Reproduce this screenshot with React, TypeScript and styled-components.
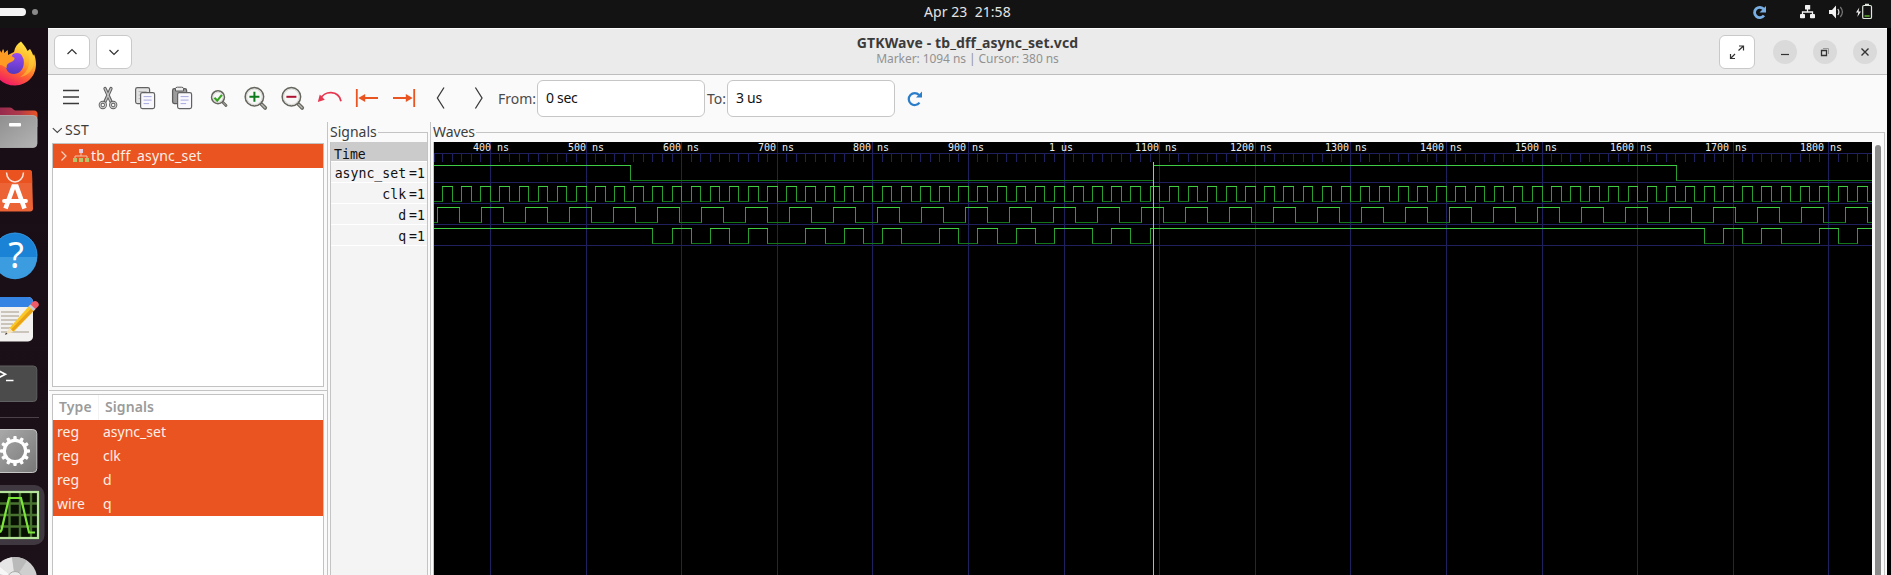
import React from "react";
import styled, { createGlobalStyle } from "styled-components";

const Global = createGlobalStyle`
  * { box-sizing: border-box; }
  html, body, #root { height: 100%; }
  body {
    margin: 0;
    overflow: hidden;
    background: #000;
    font-family: "Noto Sans", "Open Sans", sans-serif;
    font-size: 14px;
    color: #3d3d3d;
  }
  svg { display: block; flex: none; }
`;

const Desktop = styled.div`
  display: flex;
  flex-direction: column;
  width: 1891px;
  height: 575px;
  overflow: hidden;
`;

const TopBar = styled.header`
  display: flex;
  align-items: center;
  height: 28px;
  flex: none;
  background: #131313;
`;

const Clock = styled.div`
  flex: none;
  width: 88px;
  margin: -6px 0 0 924px;
  color: #e4e4e4;
  font-size: 14px;
  letter-spacing: 0.05px;
  white-space: pre;
`;

const Tray = styled.div`
  margin-left: 738px;
`;

const Body = styled.div`
  display: flex;
  flex: 1;
  min-height: 0;
`;

const DockColumn = styled.nav`
  display: flex;
  flex-direction: column;
  width: 48px;
  flex: none;
  padding-top: 3px;
  overflow: hidden;
  background: linear-gradient(#190d15, #1d1119);
`;

const DockRule = styled.div`
  width: 39px;
  height: 1px;
  flex: none;
  margin: 2px 0 1px;
  background: #4b4248;
`;

const Window = styled.main`
  display: flex;
  flex-direction: column;
  width: 1839px;
  flex: none;
  background: #fafafa;
`;

const HeaderBar = styled.div`
  display: flex;
  align-items: center;
  height: 47px;
  flex: none;
  padding: 0 10px 0 6px;
  background: #ebebeb;
  border-top: 1px solid #fdfdfd;
  border-bottom: 1px solid #bdbdbd;
`;

const HeaderButton = styled.button<{ $gap?: number }>`
  display: flex;
  width: 36px;
  height: 34px;
  flex: none;
  padding: 0;
  margin: 0 ${(p) => p.$gap ?? 6}px 0 0;
  border: 1px solid #c9c9c9;
  border-radius: 6px;
  background: #fff;
`;

const Titles = styled.div`
  flex: 1;
  padding: 0 0 2px 78px;
  text-align: center;
`;

const Title = styled.div`
  font-size: 14px;
  line-height: 17px;
  font-weight: 700;
  letter-spacing: 0.1px;
  color: #3b3b3b;
`;

const Subtitle = styled.div`
  font-size: 12px;
  line-height: 16px;
  letter-spacing: -0.07px;
  color: #929292;
`;

const WindowControl = styled.button`
  display: flex;
  width: 24px;
  height: 24px;
  flex: none;
  margin: 0 0 0 16px;
  padding: 0;
  border: 0;
  border-radius: 50%;
  background: #dadada;
`;

const ToolBar = styled.div`
  display: flex;
  height: 47px;
  flex: none;
  align-items: center;
  padding-left: 4px;
`;

const FieldLabel = styled.label<{ $width: number; $gap: number }>`
  width: ${(p) => p.$width}px;
  flex: none;
  margin: -1px 0 0 ${(p) => p.$gap}px;
  white-space: nowrap;
  font-size: 14px;
  color: #4b4b4b;
`;

const Field = styled.div`
  width: 168px;
  height: 37px;
  flex: none;
  padding-left: 8px;
  border: 1px solid #c6c6c6;
  border-radius: 6px;
  background: #fff;
  color: #111;
  font-size: 14px;
  line-height: 34px;
  letter-spacing: -0.3px;
`;

const Panes = styled.div`
  display: flex;
  flex: 1;
  min-height: 0;
`;

const SidePane = styled.aside`
  display: flex;
  flex-direction: column;
  width: 280px;
  flex: none;
  border-right: 1px solid #c4c4c4;
`;

const Expander = styled.div`
  display: flex;
  height: 21px;
  flex: none;
  padding-left: 4px;
  font-size: 14px;
  line-height: 16px;
  letter-spacing: 0.3px;
`;

const TreeBox = styled.div<{ $height?: number }>`
  width: 272px;
  flex: ${(p) => (p.$height ? "none" : "1")};
  height: ${(p) => (p.$height ? `${p.$height}px` : "auto")};
  margin-left: 4px;
  border: 1px solid #c2c2c2;
  border-bottom-width: ${(p) => (p.$height ? 1 : 0)}px;
  background: #fff;
`;

const TreeRow = styled.div<{ $spacing?: number }>`
  display: flex;
  height: 24px;
  background: #e95420;
  color: #fdeee7;
  font-size: 14px;
  line-height: 23px;
  letter-spacing: ${(p) => p.$spacing ?? 0}px;
`;

const PaneRule = styled.div`
  height: 1px;
  flex: none;
  margin: 3px 0 3px 1px;
  background: #c4c4c4;
`;

const ListHead = styled.div`
  display: flex;
  height: 25px;
  color: #9b9b9b;
  font-size: 14px;
  line-height: 24px;
  font-weight: 600;
  letter-spacing: 0.1px;
`;

const HeadCell = styled.div<{ $width?: number }>`
  width: ${(p) => (p.$width ? `${p.$width}px` : "auto")};
  padding-left: 6px;
  border-right: ${(p) => (p.$width ? "1px solid #f3f3f3" : "0")};
`;

const TypeCell = styled.div`
  width: 50px;
  padding-left: 4px;
`;

const Frame = styled.section<{ $width: number; $ruled?: boolean }>`
  display: flex;
  flex-direction: column;
  width: ${(p) => p.$width}px;
  flex: none;
  padding: 0 ${(p) => (p.$ruled ? 2 : 0)}px 0 2px;
  border-right: ${(p) => (p.$ruled ? "1px solid #c4c4c4" : "0")};
`;

const FrameCaption = styled.div<{ $spacing: number }>`
  display: flex;
  height: 20px;
  flex: none;
  font-size: 14px;
  line-height: 20px;
  letter-spacing: ${(p) => p.$spacing}px;
  &::after {
    content: "";
    flex: 1;
    height: 10px;
    margin: 10px 0 0 1px;
    border-top: 1px solid #c4c4c4;
    border-right: 1px solid #c4c4c4;
  }
`;

const FrameBody = styled.div`
  display: flex;
  flex: 1;
  border: solid #c4c4c4;
  border-width: 0 1px;
`;

const SignalList = styled.div`
  flex: 1;
  background: #f4f4f4;
  color: #111;
  font-family: "DejaVu Sans Mono", monospace;
  font-size: 13.2px;
`;

const TimeRow = styled.div`
  height: 20px;
  padding-left: 3px;
  background: #cbcbcb;
  border-bottom: 1px solid #fff;
  line-height: 25px;
`;

const SignalRow = styled.div`
  display: flex;
  justify-content: flex-end;
  gap: 3px;
  height: 21px;
  padding-right: 2px;
  border-bottom: 1px solid #fff;
  line-height: 23px;
`;

const WaveArea = styled.div`
  display: flex;
  flex: 1;
`;

const ScrollThumb = styled.div`
  width: 6px;
  height: 440px;
  flex: none;
  margin: 3px 0 0 3px;
  border-radius: 3px 3px 0 0;
  background: #8b8b8b;
`;

/* ---------- waveforms ---------- */

const LEFT = 434;
const TOP = 142;
const START = 341;
const xAt = (ns: number) => Math.floor(490.4 + 0.956 * (ns - 400)) + 0.5;

const every = (first: number, step: number) => {
  const out: number[] = [];
  for (let t = first; t < 1846; t += step) out.push(t);
  return out;
};

interface Trace {
  name: string;
  high: number;
  initial: 0 | 1;
  edges: number[];
}

const traces: Trace[] = [
  { name: "async_set", high: 165, initial: 1, edges: [547, 1094, 1641] },
  { name: "clk", high: 186, initial: 0, edges: every(350, 10) },
  { name: "d", high: 207, initial: 0, edges: every(345, 23) },
  {
    name: "q",
    high: 228,
    initial: 1,
    edges: [
      570, 590, 610, 630, 650, 670, 690, 730, 750, 770, 790, 810, 830, 870, 890,
      910, 930, 950, 970, 990, 1030, 1050, 1070, 1090, 1670, 1690, 1710, 1730,
      1750, 1790, 1810, 1830,
    ],
  },
];

const tracePaths = ({ high, initial, edges }: Trace) => {
  const hi = high + 0.5;
  const lo = high + 15.5;
  let top = "";
  let low = "";
  let sides = "";
  let level: number = initial;
  let from = LEFT;
  [...edges, Infinity].forEach((t) => {
    const x = t === Infinity ? 1872 : xAt(t);
    const seg = `M${from - 0.5} ${level ? hi : lo}H${x + 0.5}`;
    if (level) top += seg;
    else low += seg;
    if (t !== Infinity) sides += `M${x} ${hi}V${lo}`;
    level = 1 - level;
    from = x;
  });
  return { top, low, sides };
};

const labels = [
  ...[400, 500, 600, 700, 800, 900].map((n, i) => ({ text: `${n} ns`, x: 473 + 95 * i })),
  { text: "1 us", x: 1049 },
  ...[1100, 1200, 1300, 1400, 1500, 1600, 1700, 1800].map((n, i) => ({
    text: `${n} ns`,
    x: 1135 + 95 * i,
  })),
];

const Waves = () => {
  const majors = every(400, 100).map(xAt);
  const minors = every(START + 1, 1).filter((t) => t % 10 === 0 && t % 100 !== 0).map(xAt);
  return (
    <svg width="1438" height="433" viewBox={`${LEFT} ${TOP} 1438 433`}>
      <rect x={LEFT} y={TOP} width="1438" height="433" fill="#000" />
      <g stroke="#20205f" fill="none">
        <path d={[153, 182, 203, 224, 245].map((y) => `M434 ${y + 0.5}H1872`).join("")} />
        <path d={[434.5, ...minors].map((x) => `M${x} 153V162`).join("")} />
        <path d={majors.map((x) => `M${x} 142V575`).join("")} />
      </g>
      {traces.map((t) => {
        const p = tracePaths(t);
        return (
          <g key={t.name} fill="none">
            <path d={p.low} stroke="#14741a" />
            <path d={p.sides} stroke="#2a9f30" />
            <path d={p.top} stroke="#3fcb44" />
          </g>
        );
      })}
      <path d="M1153.5 162V575" stroke="#f09c98" />
      <g fill="#eee" fontFamily='"DejaVu Sans Mono", monospace' fontSize="10">
        {labels.map((l) => (
          <text key={l.text} x={l.x} y="151">{l.text}</text>
        ))}
      </g>
    </svg>
  );
};

/* ---------- toolbar icons, drawn around (0,0) ---------- */

const Tool = ({ children, w = 37 }: { children: React.ReactNode; w?: number }) => (
  <svg width={w} height="47" viewBox={`-19 -23 ${w} 47`} fill="none">
    {children}
  </svg>
);

const Sheet = ({ x, y, front }: { x: number; y: number; front?: boolean }) => (
  <g>
    <rect x={x} y={y} width="14" height="16" rx="1.8" fill={front ? "#f8f8fc" : "#e2e2e2"} stroke="#626262" strokeWidth="1.2" />
    <path d={`M${x + 3} ${y + 4}h8M${x + 3} ${y + 7.5}h8M${x + 3} ${y + 11}h5.5`} stroke={front ? "#a6a8df" : "#b3b3b3"} />
  </g>
);

const Lens = ({ r, children }: { r: number; children?: React.ReactNode }) => (
  <g>
    <path d={`M${r * 0.62} ${r * 0.65}L${r + 1.6} ${r + 1.9}`} stroke="#66665f" strokeWidth={r > 8 ? 3.8 : 2.8} strokeLinecap="round" />
    <path d={`M${r * 0.8} ${r * 0.83}L${r + 1.4} ${r + 1.7}`} stroke="#b5b5ae" strokeWidth={r > 8 ? 1.5 : 1} strokeLinecap="round" />
    <circle r={r} fill="#f7f7f7" stroke="#66665f" strokeWidth="1.6" />
    <circle r={r - 1.4} stroke="#d6d6d2" />
    {children}
  </g>
);

const tools: React.ReactNode[] = [
  <path d="M-8 -7.5H8M-8 -1H8M-8 5.5H8" stroke="#3a3a3a" strokeWidth="1.4" />,
  <g>
    <path d="M-3 -9.5L3.2 4M3 -9.5L-3.2 4" stroke="#606060" strokeWidth="3.3" strokeLinecap="round" />
    <path d="M-3 -9.5L2.6 3M3 -9.500L-2.6 3" stroke="#c4c4c4" strokeWidth="1.3" strokeLinecap="round" />
    <circle cx="-5.2" cy="7" r="2.7" stroke="#606060" strokeWidth="2.9" />
    <circle cx="5.2" cy="7" r="2.7" stroke="#606060" strokeWidth="2.9" />
    <circle cx="-5.2" cy="7" r="2.7" stroke="#c9c9c9" strokeWidth="1.1" />
    <circle cx="5.2" cy="7" r="2.7" stroke="#c9c9c9" strokeWidth="1.1" />
  </g>,
  <g>
    <Sheet x={-9.4} y={-10.4} />
    <Sheet x={-4.4} y={-5.4} front />
  </g>,
  <g>
    <rect x="-9.4" y="-9.4" width="14" height="15" rx="1.8" fill="#9c9c9c" stroke="#5c5c5c" strokeWidth="1.3" />
    <path d="M-6.5 -7v-2.5q0-1.3 2-1.3h4q2 0 2 1.3V-7z" fill="#eee" stroke="#5c5c5c" />
    <Sheet x={-4.4} y={-5.4} front />
  </g>,
  <g transform="translate(-1 -.8)">
    <Lens r={6.4}>
      <path d="M-3.600 .6l2.800 2.800L3.900 -2.4" stroke="#38a521" strokeWidth="2.1" />
    </Lens>
  </g>,
  <g transform="translate(-1.6 -1.2)">
    <Lens r={9.2}>
      <path d="M-5 0H5M0 -5V5" stroke="#0d7a1e" strokeWidth="2" />
    </Lens>
  </g>,
  <g transform="translate(-1.6 -1.2)">
    <Lens r={9.2}>
      <path d="M-5 0H5" stroke="#ad1230" strokeWidth="2" />
    </Lens>
  </g>,
  <g>
    <path d="M-9.5 1C-6 -7.5 8.5 -8 11 3.2" stroke="#e73650" strokeWidth="1.8" />
    <path d="M-12.2 4L-10.2 -3.4L-5.2 1.8z" fill="#e73650" />
  </g>,
  <g>
    <path d="M-10.2 -9V9M-4 0H11" stroke="#e95420" strokeWidth="1.8" />
    <path d="M-8.7 0L-1.8 -4v8z" fill="#e95420" />
  </g>,
  <g>
    <path d="M10.2 -9V9M4 0H-11" stroke="#e95420" strokeWidth="1.8" />
    <path d="M8.7 0L1.8 -4v8z" fill="#e95420" />
  </g>,
  <path d="M3 -10.5L-3.6 0L3 10.5" stroke="#3a3a3a" strokeWidth="1.3" />,
  <path d="M-2.6 -10.5L4 0L-2.6 10.5" stroke="#3a3a3a" strokeWidth="1.3" />,
];

/* ---------- dock icons, drawn around (0,0) ---------- */

const gear = Array.from({ length: 12 }, (_, i) => (
  <rect key={i} x="-1.7" y="-15" width="3.4" height="5" rx="1" transform={`rotate(${i * 30})`} fill="#fff" />
));

const Dock = ({ children }: { children: React.ReactNode }) => (
  <svg width="48" height="64" viewBox="-15 -32 48 64" fill="none">
    {children}
  </svg>
);

const FirefoxIcon = () => (
  <Dock>
    <defs>
      <linearGradient id="ff" x1=".8" y1="0" x2=".35" y2="1">
        <stop offset="0" stopColor="#fff04a" />
        <stop offset=".4" stopColor="#ffb02a" />
        <stop offset=".68" stopColor="#ff6230" />
        <stop offset="1" stopColor="#f01a68" />
      </linearGradient>
      <linearGradient id="ffg" x1=".5" y1="0" x2=".4" y2="1">
        <stop offset="0" stopColor="#9a4cf0" />
        <stop offset="1" stopColor="#5338c0" />
      </linearGradient>
    </defs>
    <path d="M6 -21.500C8 -19 11 -16 12.500 -12L15 -14C18 -10 17.500 -8 18.500 -7.500L19 -9C25 6 17 22 0 22.500C-14 22.500 -22 12 -21 0C-20 -7 -17 -10 -15 -13L-14 -9L-12 -14L-11 -9.500L-7.500 -13L-7 -8L-1 -11C0 -16 2 -19 6 -21.500z" fill="url(#ff)" />
    <path d="M-2 -9C2 -11 5 -10 6.500 -8L8.500 -4C10 2 7 11 -1 11C-7 11 -10 6 -9 1z" fill="url(#ffg)" />
    <path d="M-15 -12L-13 -10L-11.500 -14L-10.500 -9.500L-7.500 -12.500L-7 -8C-4 -8 -2 -6 -.5 -5C0 -3 -3 -1 -6 0C-8 1 -9 3 -8 5C-11 4 -12 2 -15 2z" fill="#ff9a22" />
    <path d="M12.500 -12C16 -4 15 8 5 14C14 13 21 5 18.500 -7.500z" fill="#ffd23a" opacity=".5" />
  </Dock>
);

const FilesIcon = () => (
  <Dock>
    <defs>
      <linearGradient id="fold" x1="0" y1="0" x2="1" y2="1">
        <stop offset="0" stopColor="#8c8c8c" />
        <stop offset="1" stopColor="#b4b4b4" />
      </linearGradient>
      <linearGradient id="tab">
        <stop offset="0" stopColor="#8f2450" />
        <stop offset=".6" stopColor="#b03a4a" />
        <stop offset="1" stopColor="#ea5425" />
      </linearGradient>
    </defs>
    <path d="M-22 -19.500H-5Q-3 -19.500 -1.500 -17.500L0 -16.500H19Q22.500 -16.500 22.500 -13V0H-22z" fill="url(#tab)" />
    <rect x="-22" y="-11.500" width="44" height="32" rx="4" fill="url(#fold)" stroke="#b5b5b5" strokeWidth=".8" />
    <rect x="-6" y="-4" width="12" height="3.500" rx="1" fill="#fff" />
  </Dock>
);

const SoftwareIcon = () => (
  <Dock>
    <path d="M-18 -21H14Q17 -21 17 -18L18 17.500Q18 20.500 15 20.500H-18z" fill="#ec6335" />
    <path d="M-18 -21H14Q17 -21 17 -18L17.200 -8H-18z" fill="#ea5220" />
    <path d="M-8.500 -18.500C-8 -6 8 -6 8.500 -18.500" stroke="#fbe6dc" strokeWidth="1.500" />
    <path d="M-9.500 17.500L-1.500 -4.500H1.500L9.500 17.500" stroke="#fff" strokeWidth="4.600" />
    <path d="M-11 10H11" stroke="#fff" strokeWidth="3.800" strokeLinecap="round" />
  </Dock>
);

const HelpIcon = () => (
  <Dock>
    <circle r="22.200" fill="#1a83d6" />
    <path d="M-22.200 2H22.200A22.200 22.200 0 0 1 -22.200 2z" fill="#3b9ce0" />
    <circle r="22" stroke="#3a9bdf" strokeWidth=".8" />
    <text x="1" y="12.500" textAnchor="middle" fill="#fff" fontFamily="Noto Sans" fontSize="36">?</text>
  </Dock>
);

const EditorIcon = () => (
  <Dock>
    <rect x="-20" y="-22" width="38" height="44.500" rx="5" fill="#f3f1ef" />
    <path d="M-20 -12V-22H13Q18 -22 18 -17V-12z" fill="#3584e4" />
    <path d="M-14 -7H4M-14 -3H4M-14 1H2M-14 5H-2M-14 9H-4M-14 13H14" stroke="#bdb5aa" strokeWidth="1.500" />
    <path d="M-5.500 9L14.500 -13.500L19.500 -9L-1.500 13z" fill="#f9c727" />
    <path d="M-2 12.500L19.500 -9L17 -11.300L-4 10.500z" fill="#eaa317" />
    <path d="M-5.500 9L-10 15.500L-1.500 13z" fill="#f6e3b8" />
    <path d="M-8.800 13.500L-10.200 15.800L-7.500 14.900z" fill="#333" />
    <path d="M14.500 -13.500L17.500 -17Q20 -19 22.500 -17Q25 -14.500 23 -12.500L19.500 -9z" fill="#ee5a68" />
    <path d="M13.500 -12.500L15.500 -14.500L20.500 -10L18.500 -8z" fill="#c8ccd0" />
  </Dock>
);

const TerminalIcon = () => (
  <Dock>
    <rect x="-22" y="-17" width="43.800" height="35.500" rx="3.500" fill="#4b4b4b" stroke="#606060" />
    <path d="M-16 -12L-9.500 -8.800L-16 -5.500M-9 -2.500H-1.500" stroke="#fff" strokeWidth="1.600" />
  </Dock>
);

const SettingsIcon = () => (
  <Dock>
    <defs>
      <linearGradient id="set" x1="0" y1="0" x2="1" y2="1">
        <stop offset="0" stopColor="#adadad" />
        <stop offset="1" stopColor="#777" />
      </linearGradient>
    </defs>
    <rect x="-22" y="-21.500" width="43.800" height="43" rx="4" fill="url(#set)" stroke="#c4c4c4" />
    {gear}
    <circle r="10.700" stroke="#fff" strokeWidth="3.200" />
  </Dock>
);

const GtkWaveIcon = () => (
  <Dock>
    <rect x="-30" y="-30" width="59.500" height="60" rx="10" fill="#403840" />
    <rect x="-24" y="-23" width="47" height="46" fill="#071003" />
    <path d="M-5.500 -22V22M5 -22V22M16 -22V22M-15 -11.500H22M-15 0H22M-15 11.500H22" stroke="#48722f" strokeWidth="2.400" />
    <rect x="-24" y="-23" width="47" height="46" stroke="#b5e59a" strokeWidth="2.200" />
    <path d="M-15 17.500L-13.500 15L-6 -17H6L14 17.500H20" stroke="#7be53a" strokeWidth="2.200" />
  </Dock>
);

const DiscIcon = () => (
  <Dock>
    <circle r="22" fill="#cfcfcf" />
    <path d="M0 0L-17 -14A22 22 0 0 1 -3 -21.800z" fill="#e6e6e6" />
    <path d="M0 0L-3 -21.800A22 22 0 0 1 12 -18.500z" fill="#bababa" />
    <path d="M0 0L-21 -7L-17 -14z" fill="#f7f7f7" />
    <circle r="7.500" fill="#e8e8e8" stroke="#aaa" />
  </Dock>
);

/* ---------- page ---------- */

const selected = [
  ["reg", "async_set"],
  ["reg", "clk"],
  ["reg", "d"],
  ["wire", "q"],
];

const WorkspaceDots = () => (
  <svg width="48" height="28" viewBox="0 0 48 28">
    <rect x="-12" y="8" width="38" height="8" rx="4" fill="#f4f4f4" />
    <circle cx="35" cy="12" r="3" fill="#8a8a8a" />
  </svg>
);

const TrayIcons = () => (
  <svg width="124" height="28" viewBox="1750 0 124 28" fill="none">
    <path d="M1763.800 9.200A5.200 5.200 0 1 0 1764 15.500" stroke="#79aee2" strokeWidth="2.800" />
    <path d="M1766 6V12.500H1759.500z" fill="#79aee2" />
    <g fill="#f2f2f2">
      <rect x="1805" y="5" width="5.200" height="4.500" rx=".6" />
      <rect x="1800" y="14" width="5" height="4.200" rx=".8" />
      <rect x="1810" y="14" width="5" height="4.200" rx=".8" />
      <path d="M1829 10h3l4-4.500v13l-4-4.500h-3z" />
      <path d="M1859.300 7.500L1856 12.500H1858.300L1857.300 17L1861 11.500H1858.500z" />
    </g>
    <path d="M1807.500 9V12M1802.500 14V12H1812.500V14" stroke="#f2f2f2" strokeWidth="1.300" />
    <path d="M1837.800 9Q1840 12 1837.800 15" stroke="#ddd" strokeWidth="1.200" />
    <path d="M1840.300 7Q1844.500 12 1840.300 17" stroke="#777" strokeWidth="1.200" />
    <rect x="1862.700" y="5.500" width="8.800" height="13" rx="1.300" stroke="#dfe8dc" strokeWidth="1.200" />
    <path d="M1865 4.500h4" stroke="#dfe8dc" strokeWidth="1.500" />
    <path d="M1864.500 16h5.200" stroke="#4b8a25" strokeWidth="2" />
  </svg>
);

const Activities = styled.div`
  width: 48px;
  flex: none;
  margin-right: -48px;
`;

export default function App() {
  return (
    <Desktop>
      <Global />
      <TopBar>
        <Activities><WorkspaceDots /></Activities>
        <Clock>{"Apr 23  21:58"}</Clock>
        <Tray><TrayIcons /></Tray>
      </TopBar>
      <Body>
        <DockColumn>
          <FirefoxIcon />
          <FilesIcon />
          <SoftwareIcon />
          <HelpIcon />
          <EditorIcon />
          <TerminalIcon />
          <DockRule />
          <SettingsIcon />
          <GtkWaveIcon />
          <DiscIcon />
        </DockColumn>
        <Window>
          <HeaderBar>
            <HeaderButton>
              <svg width="34" height="32" fill="none"><path d="M12.500 18L17 13.500L21.500 18" stroke="#333" strokeWidth="1.200" /></svg>
            </HeaderButton>
            <HeaderButton>
              <svg width="34" height="32" fill="none"><path d="M12.500 14L17 18.500L21.500 14" stroke="#333" strokeWidth="1.200" /></svg>
            </HeaderButton>
            <Titles>
              <Title>GTKWave - tb_dff_async_set.vcd</Title>
              <Subtitle>Marker: 1094 ns | Cursor: 380 ns</Subtitle>
            </Titles>
            <HeaderButton $gap={2}>
              <svg width="34" height="32" fill="none"><path d="M10.500 18V22.500H15M10.500 22.500L15 18M19 10H23.500V14.500M23.500 10L18.500 14.500" stroke="#333" strokeWidth="1.200" /></svg>
            </HeaderButton>
            <WindowControl>
              <svg width="24" height="24"><path d="M8 14.500H16" stroke="#333" strokeWidth="1.200" /></svg>
            </WindowControl>
            <WindowControl>
              <svg width="24" height="24" fill="none"><path d="M8.500 10.500h5v5h-5z" stroke="#333" strokeWidth="1.300" /><path d="M10 8.500h5.500V14" stroke="#999" /></svg>
            </WindowControl>
            <WindowControl>
              <svg width="24" height="24"><path d="M8.500 8.500L15.500 15.500M15.500 8.500L8.500 15.500" stroke="#333" strokeWidth="1.400" /></svg>
            </WindowControl>
          </HeaderBar>
          <ToolBar>
            {tools.map((t, i) => <Tool key={i}>{t}</Tool>)}
            <FieldLabel $width={39} $gap={2}>From:</FieldLabel>
            <Field>0 sec</Field>
            <FieldLabel $width={20} $gap={2}>To:</FieldLabel>
            <Field>3 us</Field>
            <Tool w={40}>
              <path d="M4.600 -3.600A6 6 0 1 0 5 4.200" transform="translate(.5 .5)" stroke="#2a7dc9" strokeWidth="2.200" />
              <path d="M8 -6.500V-.500H2z" fill="#2a7dc9" />
            </Tool>
          </ToolBar>
          <Panes>
            <SidePane>
              <Expander>
                <svg width="13" height="16" fill="none"><path d="M.8 6.200L5.300 10.500L9.800 6.200" stroke="#444" strokeWidth="1.100" /></svg>
                SST
              </Expander>
              <TreeBox $height={244}>
                <TreeRow $spacing={0.22}>
                  <svg width="38" height="24" viewBox="53 144 38 24" fill="none">
                    <path d="M61.500 151.500L66 156L61.500 160.500" stroke="#fbd3c4" strokeWidth="1.200" />
                    <path d="M81 152V156M75 158V156H87V158" stroke="#f5c0a8" />
                    <rect x="79" y="149" width="4" height="4" fill="#e4cbe8" />
                    <path d="M73 158h4v4h-4zM79 158h4v4h-4zM85 158h4v4h-4z" fill="#b5c46a" />
                  </svg>
                  tb_dff_async_set
                </TreeRow>
              </TreeBox>
              <PaneRule />
              <TreeBox>
                <ListHead>
                  <HeadCell $width={46}>Type</HeadCell>
                  <HeadCell>Signals</HeadCell>
                </ListHead>
                {selected.map(([type, name]) => (
                  <TreeRow key={name}>
                    <TypeCell>{type}</TypeCell>
                    {name}
                  </TreeRow>
                ))}
              </TreeBox>
            </SidePane>
            <Frame $width={103} $ruled>
              <FrameCaption $spacing={0}>Signals</FrameCaption>
              <FrameBody>
                <SignalList>
                  <TimeRow>Time</TimeRow>
                  {traces.map((t) => (
                    <SignalRow key={t.name}>
                      <span>{t.name}</span>
                      <span>=1</span>
                    </SignalRow>
                  ))}
                </SignalList>
              </FrameBody>
            </Frame>
            <Frame $width={1454}>
              <FrameCaption $spacing={-0.1}>Waves</FrameCaption>
              <FrameBody>
                <WaveArea>
                  <Waves />
                  <ScrollThumb />
                </WaveArea>
              </FrameBody>
            </Frame>
          </Panes>
        </Window>
      </Body>
    </Desktop>
  );
}
